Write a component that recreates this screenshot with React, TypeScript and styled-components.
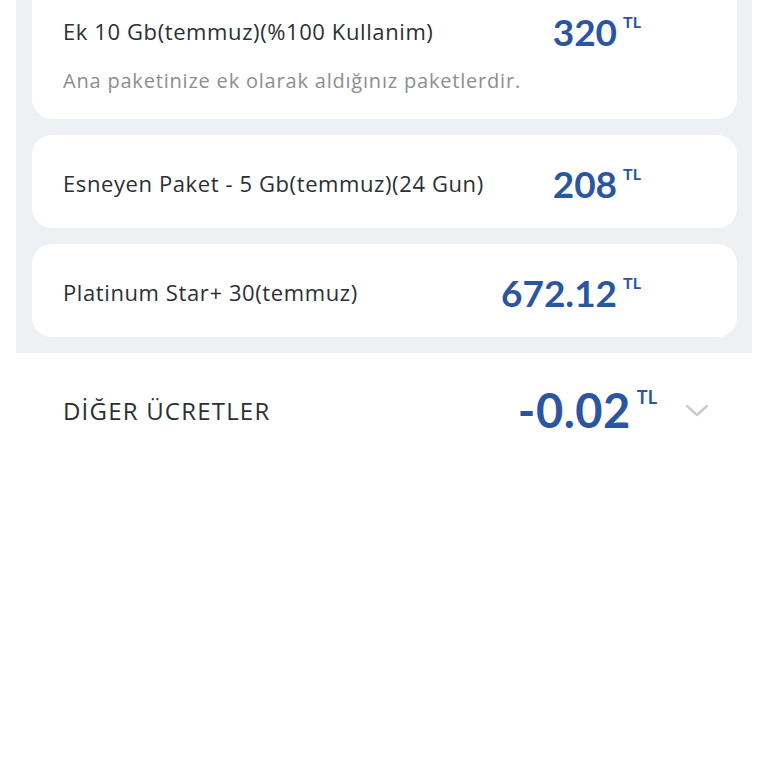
import { createGlobalStyle, styled } from 'styled-components';

const GlobalStyle = createGlobalStyle`
  html, body {
    margin: 0;
    padding: 0;
    background: #ffffff;
  }
  body {
    font-family: 'Open Sans', 'Noto Sans', sans-serif;
    -webkit-font-smoothing: antialiased;
  }
`;

interface PackageItem {
  name: string;
  price: string;
  note?: string;
}

const packages: PackageItem[] = [
  {
    name: 'Ek 10 Gb(temmuz)(%100 Kullanim)',
    price: '320',
    note: 'Ana paketinize ek olarak aldığınız paketlerdir.',
  },
  { name: 'Esneyen Paket - 5 Gb(temmuz)(24 Gun)', price: '208' },
  { name: 'Platinum Star+ 30(temmuz)', price: '672.12' },
];

function Chevron() {
  return (
    <svg width="24" height="16" viewBox="0 0 24 16" fill="none">
      <path d="M2 4l10 9 10-9" stroke="#c9cbce" strokeWidth="2.4" strokeLinecap="round" strokeLinejoin="round" />
    </svg>
  );
}

export default function App() {
  return (
    <>
      <GlobalStyle />
      <Page>
        <Panel>
          {packages.map((item, i) => (
            <Card key={item.name} $first={i === 0}>
              <Row>
                <Name>{item.name}</Name>
                <Price>
                  {item.price}
                  <Currency>TL</Currency>
                </Price>
              </Row>
              {item.note && <Note>{item.note}</Note>}
            </Card>
          ))}
        </Panel>
        <Summary>
          <SummaryLabel>DİĞER ÜCRETLER</SummaryLabel>
          <SummaryPrice>
            -0.02
            <Currency $large>TL</Currency>
          </SummaryPrice>
          <ChevronBox>
            <Chevron />
          </ChevronBox>
        </Summary>
      </Page>
    </>
  );
}

const Page = styled.div`
  width: 768px;
  height: 768px;
  overflow: hidden;
  background: #ffffff;
`;

const Panel = styled.div`
  margin: -20px 16px 0;
  padding: 0 15px 16px 16px;
  background: #eef1f4;
  display: flex;
  flex-direction: column;
  gap: 16px;
`;

const Card = styled.div<{ $first?: boolean }>`
  background: #ffffff;
  border-radius: 20px;
  padding: ${({ $first }) => ($first ? '31px 96px 26px 31px' : '28px 96px 25px 31px')};
  display: flex;
  flex-direction: column;
  gap: 18px;
`;

const Row = styled.div`
  display: flex;
  align-items: center;
  height: 40px;
`;

const Name = styled.div`
  flex: 1;
  font-size: 22px;
  font-weight: 500;
  letter-spacing: 0.6px;
  color: #2b2f36;
  white-space: nowrap;
`;

const Price = styled.div`
  display: flex;
  align-items: flex-start;
  font-family: 'Lato', sans-serif;
  font-size: 37px;
  font-weight: 700;
  color: #2a55a3;
  line-height: 1;
`;

const Currency = styled.span<{ $large?: boolean }>`
  font-family: 'Lato', sans-serif;
  font-size: ${({ $large }) => ($large ? '18px' : '16px')};
  font-weight: 700;
  letter-spacing: 0;
  margin-left: 6px;
  margin-top: 1px;
  line-height: 1;
`;

const Note = styled.div`
  font-size: 20px;
  line-height: 24px;
  letter-spacing: 0.8px;
  color: #8b8e93;
  white-space: nowrap;
`;

const Summary = styled.div`
  display: flex;
  align-items: center;
  height: 114px;
  padding: 0 59px 0 63px;
`;

const SummaryLabel = styled.div`
  flex: 1;
  font-size: 24px;
  font-weight: 500;
  letter-spacing: 1.2px;
  color: #2b2f36;
`;

const SummaryPrice = styled.div`
  display: flex;
  align-items: flex-start;
  font-family: 'Lato', sans-serif;
  font-size: 47px;
  font-weight: 700;
  letter-spacing: 0.5px;
  color: #2a55a3;
  line-height: 1;
`;

const ChevronBox = styled.div`
  display: flex;
  align-items: center;
  margin-left: 28px;
`;
